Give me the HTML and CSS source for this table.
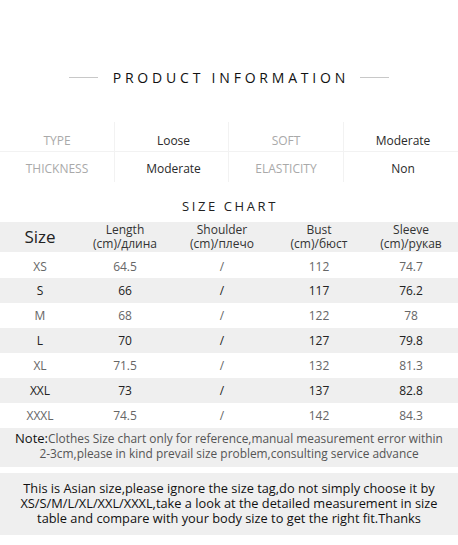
FILE: index.html
```html
<!DOCTYPE html>
<html>
<head>
<meta charset="utf-8">
<link rel="stylesheet" href="styles.css">
</head>
<body>
<div class="page">
  <div class="title">
    <span class="rule"></span>
    <h1>PRODUCT INFORMATION</h1>
    <span class="rule"></span>
  </div>

  <div class="attrs">
    <div class="cell label top">TYPE</div>
    <div class="cell value top">Loose</div>
    <div class="cell label top">SOFT</div>
    <div class="cell value top">Moderate</div>
    <div class="cell label bottom">THICKNESS</div>
    <div class="cell value bottom">Moderate</div>
    <div class="cell label bottom">ELASTICITY</div>
    <div class="cell value bottom">Non</div>
  </div>

  <h2 class="chart-title">SIZE CHART</h2>

  <div class="sizes">
    <div class="row head">
      <div class="c size-h">Size</div>
      <div class="c">Length<br>(cm)/длина</div>
      <div class="c">Shoulder<br>(cm)/плечо</div>
      <div class="c">Bust<br>(cm)/бюст</div>
      <div class="c">Sleeve<br>(cm)/рукав</div>
    </div>
    <div class="row light first"><div class="c">XS</div><div class="c">64.5</div><div class="c">/</div><div class="c">112</div><div class="c">74.7</div></div>
    <div class="row dark"><div class="c">S</div><div class="c">66</div><div class="c">/</div><div class="c">117</div><div class="c">76.2</div></div>
    <div class="row light"><div class="c">M</div><div class="c">68</div><div class="c">/</div><div class="c">122</div><div class="c">78</div></div>
    <div class="row dark"><div class="c">L</div><div class="c">70</div><div class="c">/</div><div class="c">127</div><div class="c">79.8</div></div>
    <div class="row light"><div class="c">XL</div><div class="c">71.5</div><div class="c">/</div><div class="c">132</div><div class="c">81.3</div></div>
    <div class="row dark"><div class="c">XXL</div><div class="c">73</div><div class="c">/</div><div class="c">137</div><div class="c">82.8</div></div>
    <div class="row light"><div class="c">XXXL</div><div class="c">74.5</div><div class="c">/</div><div class="c">142</div><div class="c">84.3</div></div>
  </div>

  <p class="note"><b>Note:</b>Clothes Size chart only for reference,manual measurement error within<br>2-3cm,please in kind prevail size problem,consulting service advance</p>

  <p class="asian">This is Asian size,please ignore the size tag,do not simply choose it by<br>XS/S/M/L/XL/XXL/XXXL,take a look at the detailed measurement in size<br>table and compare with your body size to get the right fit.Thanks</p>
</div>
</body>
</html>
```

FILE: styles.css
```css
html, body {
  margin: 0;
  padding: 0;
  background: #fff;
}

.page {
  width: 458px;
  font-family: "Open Sans", "Noto Sans", sans-serif;
  color: #333;
  padding-top: 66px;
}

.title {
  display: flex;
  align-items: center;
  justify-content: center;
  gap: 15px;
  height: 22px;
}

.title h1 {
  margin: 0 -3.8px 0 0;
  font-size: 14px;
  font-weight: 400;
  letter-spacing: 3.8px;
  color: #111;
}

.rule {
  width: 29px;
  height: 1px;
  background: #c8c8c8;
}

.attrs {
  margin-top: 34px;
  display: grid;
  grid-template-columns: 115px 114px 115px 114px;
  grid-auto-rows: 30px;
}

.attrs .cell {
  display: flex;
  align-items: center;
  justify-content: center;
  font-size: 12px;
  border-right: 1px solid #f2f2f2;
  border-bottom: 1px solid #f2f2f2;
  box-sizing: border-box;
}

.attrs .cell.top {
  padding-top: 8px;
}

.attrs .cell.bottom {
  padding-top: 2px;
}

.attrs .cell:nth-child(4n) {
  border-right: none;
}

.attrs .cell:nth-child(n+5) {
  border-bottom: none;
}

.attrs .label {
  color: #a9a9a9;
}

.attrs .value {
  color: #2a2a2a;
  padding-left: 4px;
}

.chart-title {
  margin: 12.5px 0 0 2px;
  height: 22px;
  line-height: 22px;
  text-align: center;
  font-size: 13px;
  font-weight: 400;
  letter-spacing: 2.6px;
  color: #222;
}

.sizes {
  margin-top: 5.5px;
}

.row {
  display: grid;
  grid-template-columns: 80px 90px 104px 90px 94px;
  height: 25px;
  align-items: center;
}

.row .c {
  text-align: center;
  font-size: 12px;
}

.row.head {
  height: 30px;
  background: #efefef;
  color: #333;
  line-height: 14px;
}

.row.head .size-h {
  font-size: 17px;
  color: #222;
  line-height: 20px;
}

.row.light {
  color: #666;
}

.row.first {
  height: 26px;
  padding-top: 2px;
  box-sizing: border-box;
}

.row.dark {
  background: #efefef;
  color: #222;
}

.note {
  margin: 0;
  background: #efefef;
  height: 39px;
  box-sizing: border-box;
  padding: 3px 4px 0;
  text-align: center;
  font-size: 11.9px;
  line-height: 15px;
  color: #555;
  white-space: nowrap;
}

.note b {
  font-weight: 400;
  color: #111;
  font-size: 13px;
}

.asian {
  margin: 6px 0 0;
  background: #efefef;
  height: 62px;
  box-sizing: border-box;
  padding: 8px 4px 0;
  text-align: center;
  font-size: 12.8px;
  line-height: 15px;
  color: #111;
  white-space: nowrap;
}
```
